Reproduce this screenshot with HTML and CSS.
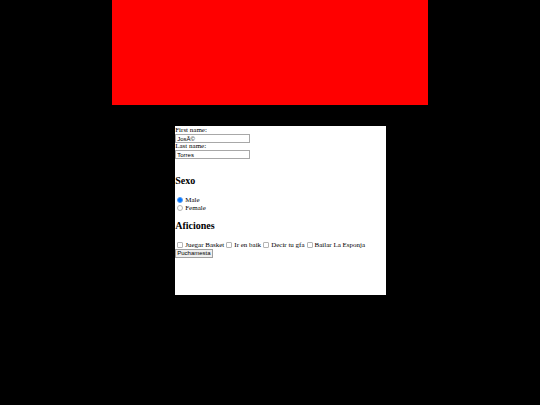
FILE: index.html
```
<!DOCTYPE html>
<html lang="es">
<head>
  <meta charset="UTF-8" />
  <title>Formulario</title>
  <link rel="stylesheet" href="styles.css">
</head>
<body>
  <div id="contenedor">
    <div id="cabecera"></div>

    <form id="formulario">
      <label class="campo" for="nombre">First name:</label>
      <input type="text" id="nombre" name="firstname" value="JosÃ©">
      <label class="campo" for="apellido">Last name:</label>
      <input type="text" id="apellido" name="lastname" value="Torres">
      <br>

      <h2>Sexo</h2>
      <label class="opcion"><input type="radio" name="sexo" value="male" checked> Male</label>
      <label class="opcion"><input type="radio" name="sexo" value="female"> Female</label>

      <h2>Aficiones</h2>
      <div class="aficiones">
        <label class="opcion"><input type="checkbox" name="aficion" value="basket"> Juegar Basket</label>
        <label class="opcion"><input type="checkbox" name="aficion" value="baik"> Ir en baik</label>
        <label class="opcion"><input type="checkbox" name="aficion" value="gfa"> Decir tu gfa</label>
        <label class="opcion"><input type="checkbox" name="aficion" value="esponja"> Bailar La Esponja</label>
      </div>
      <button type="button">Puchamesta</button>
    </form>
  </div>
</body>
</html>
```
FILE: styles.css
```
body {
  margin: 0;
  background-color: black;
  font-family: "Liberation Serif", "Times New Roman", serif;
  font-size: 7px;
  line-height: 8px;
}
#contenedor {
  width: 58.5%;
  margin: 0 auto;
}
#cabecera {
  height: 105px;
  background-color: red;
}
#formulario {
  box-sizing: border-box;
  width: 66.8%;
  min-height: 169px;
  margin-top: 21px;
  margin-left: 20%;
  padding-top: 1px;
  background-color: white;
}
.campo {
  display: block;
  line-height: 7px;
}
input[type="text"] {
  display: block;
  box-sizing: border-box;
  width: 75px;
  height: 9px;
  padding: 0 1px;
  border: 1px solid #a8a8a8;
  font-family: "Liberation Sans", Arial, sans-serif;
  font-size: 6px;
  line-height: 7px;
}
h2 {
  margin: 8px 0 9px;
  font-size: 10px;
  line-height: 12px;
}
.opcion {
  display: flex;
  align-items: center;
  gap: 2px;
  white-space: nowrap;
}
.opcion input {
  appearance: none;
  box-sizing: border-box;
  width: 6px;
  height: 6px;
  margin: 0;
  margin-left: 2px;
  border: 1px solid #b4b4b4;
  border-radius: 1px;
  background-color: white;
}
.opcion input[type="radio"] {
  border-radius: 50%;
}
.opcion input:checked {
  border-color: #5a9ff5;
  background-color: #0075ff;
}
.aficiones {
  display: flex;
}
button {
  display: block;
  box-sizing: border-box;
  height: 9px;
  padding: 0 1px;
  border: 1px solid #a0a0a0;
  background-color: #efefef;
  color: black;
  font-family: "Liberation Sans", Arial, sans-serif;
  font-size: 6px;
  line-height: 7px;
}
```
